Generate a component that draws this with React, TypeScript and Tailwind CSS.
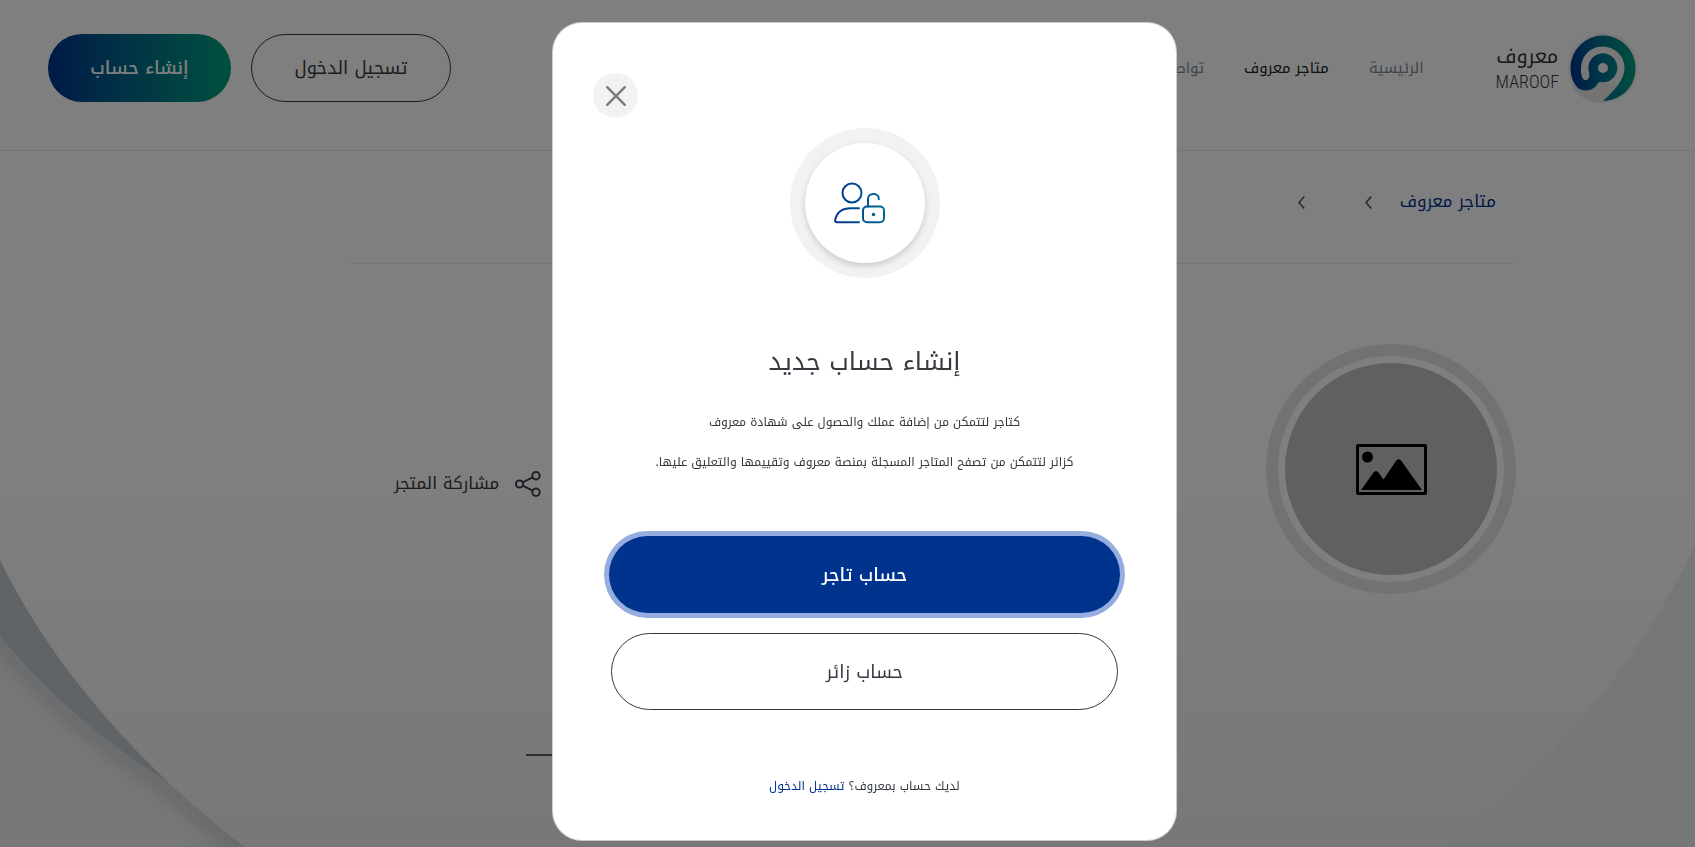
'use client';

import { useState } from 'react';

const navLinks = [
  { label: 'الرئيسية', active: false },
  { label: 'متاجر معروف', active: true },
  { label: 'تواصل معنا', active: false },
];

function LogoMark() {
  return (
    <svg viewBox="0 0 76 76" className="w-[76px] h-[76px]" fill="none" aria-hidden="true">
      <defs>
        <linearGradient id="logo-ring" x1="5" y1="40" x2="71" y2="34" gradientUnits="userSpaceOnUse">
          <stop offset="0" stopColor="#00338d" />
          <stop offset="0.5" stopColor="#00728f" />
          <stop offset="1" stopColor="#00a07c" />
        </linearGradient>
      </defs>
      <circle cx="38" cy="38" r="35" fill="#f1f1f1" />
      <path d="M7 56a35 35 0 0 0 31 17c8-4 14-9 18-16l-28-6z" fill="#e6e6e6" />
      <circle cx="38" cy="38" r="14" fill="#fff" />
      {/* outer swirl with the tail, then the head of the meem */}
      <path
        d="M38 71C58 70 70.500 56 70.500 38A32.500 32.500 0 1 0 5.500 38C5.500 47 9 54 13 58C18 62 27 61 31 56C32.500 54 33 52.500 35 52A14.500 14.500 0 1 0 24 42C25 45 24.500 47.500 22.500 49.500C20 51.500 16.800 49 16.400 44C14 29 23 16.500 38 16.500A21.500 21.500 0 0 1 59.500 38C59.500 50 49 61 38 71Z"
        fill="url(#logo-ring)"
      />
      <circle cx="38" cy="38" r="5" fill="#f1f1f1" />
    </svg>
  );
}

function UserLockIcon() {
  return (
    <svg viewBox="0 0 66 54" className="w-[66px] h-[54px]" fill="none" stroke="url(#user-lock)" strokeWidth="2" strokeLinecap="round" strokeLinejoin="round" aria-hidden="true">
      <defs>
        <linearGradient id="user-lock" x1="8" y1="0" x2="60" y2="0" gradientUnits="userSpaceOnUse">
          <stop offset="0" stopColor="#00338d" />
          <stop offset="1" stopColor="#006b94" />
        </linearGradient>
      </defs>
      <circle cx="26" cy="17" r="9.500" />
      <path d="M33 32.300H25C16 32.300 10.500 37 9.200 44.200C9 45.500 9.500 46.200 10.800 46.200H33" />
      <rect x="37" y="30.500" width="21" height="15.800" rx="4" />
      <path d="M42 30.500V23C42 16.500 52.500 16.500 52.800 22.500V23.200" />
      <circle cx="47.500" cy="38.500" r="0.800" />
    </svg>
  );
}

function ShareIcon() {
  return (
    <svg viewBox="0 0 26 26" className="w-[26px] h-[26px]" fill="none" stroke="#3a434c" strokeWidth="2" aria-hidden="true">
      <circle cx="4.500" cy="13" r="3.600" />
      <circle cx="21" cy="4.700" r="3.700" />
      <circle cx="21" cy="21.300" r="3.700" />
      <path d="M7.700 11.400L17.700 6.400M7.700 14.600L17.700 19.600" />
    </svg>
  );
}

function ImageIcon() {
  return (
    <svg viewBox="0 0 71 51" className="w-[71px] h-[51px]" aria-hidden="true">
      <rect x="1.500" y="1.500" width="68" height="48" rx="0.500" fill="none" stroke="#000" strokeWidth="3" />
      <circle cx="11.500" cy="13" r="5.500" />
      <path d="M5 46L17.500 28.500Q20 25.500 22.500 28.500L27.500 35.500L40 17Q42.800 13.500 45.500 17L66 46Z" />
    </svg>
  );
}

function Chevron() {
  return (
    <svg viewBox="0 0 7 13" className="w-[7px] h-[13px]" fill="none" stroke="#555" strokeWidth="1.6" aria-hidden="true">
      <path d="M6.300 0.500L1 6.500L6.300 12.500" />
    </svg>
  );
}

function PageCurves() {
  return (
    <>
      <svg viewBox="0 0 250 290" className="absolute bottom-0 left-0 w-[250px] h-[290px]" aria-hidden="true">
        <defs>
          <filter id="soft" x="-20%" y="-20%" width="140%" height="140%">
            <feGaussianBlur stdDeviation="12" />
          </filter>
          <clipPath id="lower-curve">
            <path d="M0 80C50 140 110 190 168 225Q205 260 245 290H0Z" />
          </clipPath>
        </defs>
        <path d="M0 3C38 80 90 150 168 225C110 190 50 140 0 80Z" fill="#c2c9cd" />
        <g clipPath="url(#lower-curve)">
          <path d="M0 80H250V290H0Z" fill="#f0f1f4" />
          <path d="M-20 58C50 140 110 190 168 225Q205 260 260 302" fill="none" stroke="#c8cacd" strokeWidth="22" filter="url(#soft)" />
        </g>
      </svg>
      <svg viewBox="0 0 250 302" className="absolute bottom-0 right-0 w-[250px] h-[302px]" aria-hidden="true">
        <path d="M250 0C205 96 130 200 0 302H250Z" fill="#eceff3" />
      </svg>
    </>
  );
}

function SignUpModal({ onClose }: { onClose: () => void }) {
  return (
    <div className="fixed inset-0 z-10 flex items-start justify-center overflow-auto bg-black/50 pt-[22px] pl-[34px]">
      <div role="dialog" aria-labelledby="signup-title" className="w-[625px] max-w-full rounded-[30px] border border-black/20 bg-white px-14 pt-[50px] pb-[42px] text-[#343a40]">
        <div className="-mx-4 flex justify-end">
          <button onClick={onClose} aria-label="إغلاق" className="flex size-[45px] items-center justify-center rounded-full bg-[#f1f2f4]">
            <svg viewBox="0 0 20 20" className="size-5" stroke="#7b7b7b" strokeWidth="2.4" strokeLinecap="round">
              <path d="M1.200 1.200L18.800 18.800M18.800 1.200L1.200 18.800" />
            </svg>
          </button>
        </div>
        <div className="mx-auto mt-2.5 flex size-[150px] items-center justify-center rounded-full bg-[#f1f2f4]">
          <div className="flex size-[120px] items-center justify-center rounded-full bg-white pr-3 shadow-[0_3px_6px_rgba(0,0,0,0.16)]">
            <UserLockIcon />
          </div>
        </div>
        <div className="text-center">
          <h2 id="signup-title" className="mt-16 text-[25px] leading-10">إنشاء حساب جديد</h2>
          <p className="mt-7 text-xs leading-6">كتاجر لتتمكن من إضافة عملك والحصول على شهادة معروف</p>
          <p className="mt-4 text-xs leading-6">كزائر لتتمكن من تصفح المتاجر المسجلة بمنصة معروف وتقييمها والتعليق عليها.</p>
        </div>
        <div className="mt-[62px] flex flex-col gap-5 text-lg">
          <button className="h-[77px] rounded-full bg-[#00338d] font-medium text-white shadow-[0_0_0_5px_#95aedf]">حساب تاجر</button>
          <button className="mx-0.5 h-[77px] rounded-full border border-[#343a40]">حساب زائر</button>
        </div>
        <p className="mt-16 text-center text-xs leading-6">
          لديك حساب بمعروف؟ <a href="#" className="text-[#00338d]">تسجيل الدخول</a>
        </p>
      </div>
    </div>
  );
}

export default function App() {
  const [isOpen, setIsOpen] = useState(true);

  return (
    <div
      dir="rtl"
      className="relative min-h-screen overflow-hidden bg-linear-to-b from-white from-55% to-[#f0f0f0] font-['Noto_Kufi_Arabic','DejaVu_Sans_Condensed',sans-serif] text-[#212529]"
    >
      <PageCurves />

      <header className="relative flex items-start justify-between border-b border-[#e6e8ea] pt-[34px] pr-[54px] pb-12 pl-12">
        <div className="flex h-[68px] items-center">
          <a href="#" aria-label="معروف" className="flex items-center gap-1.5">
            <LogoMark />
            <span className="flex flex-col items-center text-[#343434]">
              <span className="text-xl leading-7">معروف</span>
              <span className="font-['Roboto_Condensed',Roboto,sans-serif] text-lg leading-6 font-light">MAROOF</span>
            </span>
          </a>
          <nav className="mr-[72px] flex gap-10 text-[15px] whitespace-nowrap">
            {navLinks.map((link) => (
              <a key={link.label} href="#" className={link.active ? 'text-[#212529]' : 'text-[#7d8b99]'}>
                {link.label}
              </a>
            ))}
          </nav>
        </div>
        <div className="flex gap-5 text-lg">
          <button className="h-[68px] w-[200px] rounded-full border border-[#343a40] text-[#343a40]">تسجيل الدخول</button>
          <button onClick={() => setIsOpen(true)} className="h-[68px] w-[183px] rounded-full bg-linear-to-r from-[#00338d] to-[#00a07c] font-medium text-white">
            إنشاء حساب
          </button>
        </div>
      </header>

      <main className="relative pr-[179px] pl-[348px]">
        <div className="flex h-[113px] items-center border-b border-[#ebedef] pr-5 pb-2.5">
          <a href="#" className="text-[17px] text-[#00338d]">متاجر معروف</a>
          <span className="mr-7"><Chevron /></span>
          <span className="mr-[60px]"><Chevron /></span>
        </div>
        <div className="mt-20 flex items-center justify-between pl-[46px]">
          <div className="flex size-[250px] items-center justify-center rounded-full border-12 border-[#e1e5e9] bg-white">
            <div className="flex size-[212px] items-center justify-center rounded-full bg-[#c1c1c1]">
              <ImageIcon />
            </div>
          </div>
          <button className="mt-[30px] flex items-center gap-4 text-[17px] text-[#343a40]">
            <ShareIcon />
            مشاركة المتجر
          </button>
        </div>
        <div className="mt-40 mr-auto ml-[178px] h-0.5 w-[120px] bg-[#59606a]" />
      </main>

      {isOpen && <SignUpModal onClose={() => setIsOpen(false)} />}
    </div>
  );
}
